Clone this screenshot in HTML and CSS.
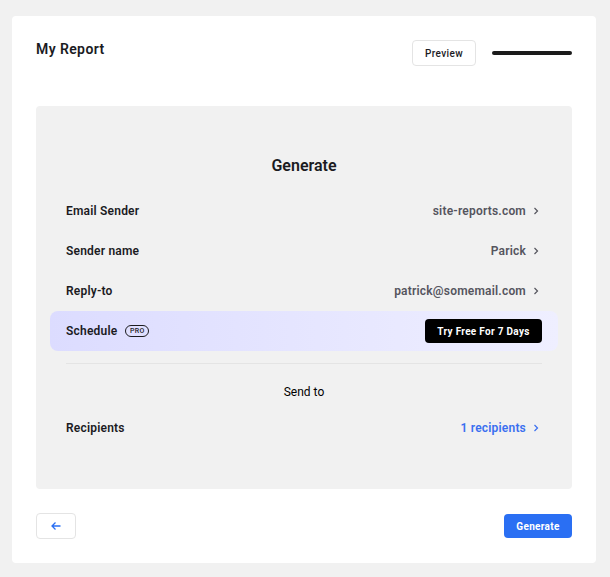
FILE: index.html
```html
<!DOCTYPE html>
<html>
	<head>
		<meta charset="UTF-8">
		<title>My Report</title>
		<link rel="stylesheet" href="styles.css">
	</head>
	<body>
		<div class="card">
			<div class="head">
				<h1 class="title">My Report</h1>
				<div class="head-right">
					<button class="btn-preview">Preview</button>
					<div class="progress"></div>
				</div>
			</div>
			<div class="panel">
				<h2 class="panel-title">Generate</h2>
				<div class="row">
					<span class="label">Email Sender</span>
					<span class="value">site-reports.com<svg class="chev" viewBox="0 0 6 8"><path d="M1.5 1l3 3-3 3"/></svg></span>
				</div>
				<div class="row">
					<span class="label">Sender name</span>
					<span class="value">Parick<svg class="chev" viewBox="0 0 6 8"><path d="M1.5 1l3 3-3 3"/></svg></span>
				</div>
				<div class="row">
					<span class="label">Reply-to</span>
					<span class="value">patrick@somemail.com<svg class="chev" viewBox="0 0 6 8"><path d="M1.5 1l3 3-3 3"/></svg></span>
				</div>
				<div class="row row-pro">
					<span class="label">Schedule<span class="pro">PRO</span></span>
					<button class="btn-try">Try Free For 7 Days</button>
				</div>
				<div class="divider"></div>
				<div class="send-to">Send to</div>
				<div class="row">
					<span class="label">Recipients</span>
					<span class="value value-blue">1 recipients<svg class="chev" viewBox="0 0 6 8"><path d="M1.5 1l3 3-3 3"/></svg></span>
				</div>
			</div>
			<div class="foot">
				<button class="btn-back"><svg class="arrow" viewBox="0 0 10 10"><path d="M9.5 5H1M4.5 1.5L1 5l3.5 3.5"/></svg></button>
				<button class="btn-generate">Generate</button>
			</div>
		</div>
	</body>
</html>
```
FILE: styles.css
```css
*{
	margin:0px;
	padding:0px;
	box-sizing:border-box;
	outline:none;
}
body{
	background:#f1f1f1;
	font-family:Roboto,"Liberation Sans",sans-serif;
	color:#1b1b1f;
	padding:16px 14px 14px 12px;
}
button{
	font-family:Roboto,"Liberation Sans",sans-serif;
}
.card{
	background:#fff;
	border-radius:4px;
	height:547px;
	padding:24px;
}
.head{
	display:flex;
	justify-content:space-between;
	align-items:flex-start;
	height:66px;
}
.title{
	font-size:14px;
	line-height:18px;
	font-weight:600;
	letter-spacing:0.4px;
}
.head-right{
	display:flex;
	align-items:center;
	gap:16px;
}
.btn-preview{
	width:64px;
	height:26px;
	background:#fff;
	border:1px solid #e4e4e4;
	border-radius:4px;
	font-size:10px;
	font-weight:500;
	letter-spacing:0.4px;
	color:#1b1b1f;
}
.progress{
	width:80px;
	height:4px;
	background:#1b1b1b;
	border-radius:2px;
}
.panel{
	background:#f1f1f1;
	border-radius:4px;
	height:383px;
	padding:50px 30px 0;
}
.panel-title{
	font-size:16px;
	line-height:20px;
	font-weight:600;
	text-align:center;
	margin-bottom:15px;
}
.row{
	display:flex;
	justify-content:space-between;
	align-items:center;
	height:40px;
	font-size:12px;
	letter-spacing:0.2px;
}
.label{
	display:flex;
	align-items:center;
	font-weight:600;
}
.value{
	display:flex;
	align-items:center;
	font-weight:600;
	color:#55555e;
}
.value-blue{
	color:#3a6ff0;
}
.chev{
	width:6px;
	height:8px;
	margin-left:7px;
	margin-right:3px;
	fill:none;
	stroke:currentColor;
	stroke-width:1.2;
}
.row-pro{
	margin:0 -16px;
	padding:0 16px;
	border-radius:8px;
	background:linear-gradient(90deg,#dcdcff,#efefff);
}
.pro{
	margin-left:8px;
	width:24px;
	height:12px;
	border:1px solid #1b1b1f;
	border-radius:6px;
	font-size:7px;
	line-height:10px;
	font-weight:500;
	letter-spacing:0.4px;
	text-align:center;
}
.btn-try{
	width:117px;
	height:24px;
	background:#000;
	color:#fff;
	border:none;
	border-radius:4px;
	font-size:10px;
	font-weight:700;
	letter-spacing:0.3px;
}
.divider{
	height:1px;
	background:#e4e4e4;
	margin-top:12px;
}
.send-to{
	font-size:12px;
	line-height:16px;
	text-align:center;
	color:#000;
	margin-top:20px;
	margin-bottom:8px;
}
.foot{
	display:flex;
	justify-content:space-between;
	align-items:center;
	margin-top:24px;
}
.btn-back{
	display:flex;
	align-items:center;
	justify-content:center;
	width:40px;
	height:26px;
	background:#fff;
	border:1px solid #e4e4e4;
	border-radius:4px;
}
.arrow{
	width:10px;
	height:10px;
	fill:none;
	stroke:#2a6ff3;
	stroke-width:1.3;
}
.btn-generate{
	width:68px;
	height:24px;
	background:#2a6ff3;
	color:#fff;
	border:none;
	border-radius:4px;
	font-size:10px;
	font-weight:700;
	letter-spacing:0.3px;
}
```
